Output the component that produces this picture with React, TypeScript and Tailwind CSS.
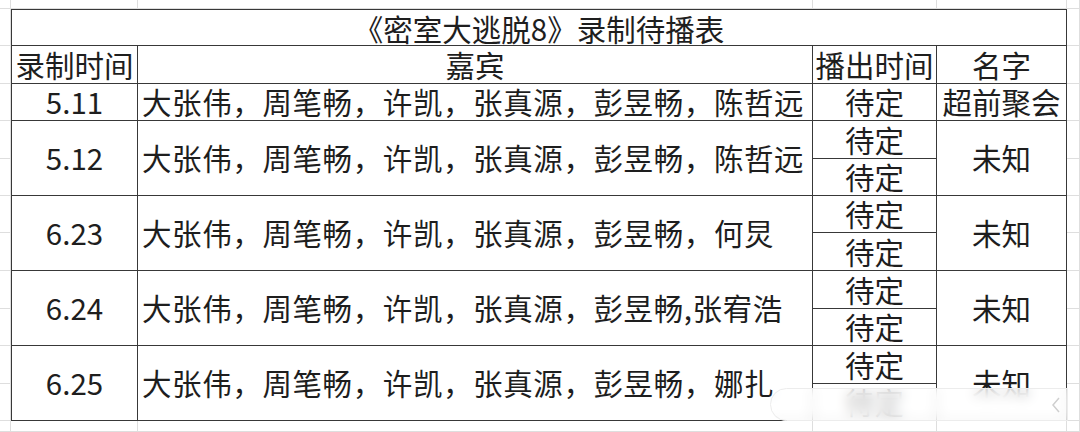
import type { ReactNode } from 'react'

const font = { fontFamily: '"Noto Sans CJK SC", "Noto Sans", sans-serif' }

type Group = {
  date: string
  guests: string
  span: string
  first: string
  second: string
}

const groups: Group[] = [
  { date: '5.12', guests: '大张伟，周笔畅，许凯，张真源，彭昱畅，陈哲远', span: 'row-start-5 row-span-2', first: 'row-start-5', second: 'row-start-6' },
  { date: '6.23', guests: '大张伟，周笔畅，许凯，张真源，彭昱畅，何炅', span: 'row-start-7 row-span-2', first: 'row-start-7', second: 'row-start-8' },
  { date: '6.24', guests: '大张伟，周笔畅，许凯，张真源，彭昱畅,张宥浩', span: 'row-start-9 row-span-2', first: 'row-start-9', second: 'row-start-10' },
  { date: '6.25', guests: '大张伟，周笔畅，许凯，张真源，彭昱畅，娜扎', span: 'row-start-11 row-span-2', first: 'row-start-11', second: 'row-start-12' },
]

const tracks =
  'grid grid-cols-[11px_127px_675px_124px_130px_13px] grid-rows-[9px_37px_38px_37px_38px_37px_37px_38px_38px_37px_38px_37px_11px]'

function Cell({ className, children, left }: { className: string; children?: ReactNode; left?: boolean }) {
  return (
    <div
      className={`flex items-center justify-center whitespace-nowrap bg-white border-r-[1.5px] border-b-[1.5px] border-[#383838] text-[#1e1e1e] leading-none ${left ? 'border-l-[1.5px]' : ''} ${className}`}
    >
      {children}
    </div>
  )
}

export default function App() {
  return (
    <div className="grid h-[432px] w-[1080px] overflow-hidden bg-white relative text-[29.5px]" style={font}>
      {/* faint spreadsheet grid behind the table */}
      <div className={`col-start-1 row-start-1 ${tracks}`}>
        {Array.from({ length: 78 }).map((_, i) => (
          <div key={i} className="border-r border-b border-[#dedede]" />
        ))}
      </div>

      <div className={`col-start-1 row-start-1 ${tracks}`}>
        <Cell left className="col-start-2 col-span-4 row-start-2 border-t-[1.5px] pt-[2px]">
          《密室大逃脱8》录制待播表
        </Cell>

        <Cell left className="col-start-2 row-start-3">录制时间</Cell>
        <Cell className="col-start-3 row-start-3">嘉宾</Cell>
        <Cell className="col-start-4 row-start-3">播出时间</Cell>
        <Cell className="col-start-5 row-start-3">名字</Cell>

        <Cell left className="col-start-2 row-start-4">5.11</Cell>
        <Cell className="col-start-3 row-start-4 justify-start pl-[4px] tracking-[0.6px]">大张伟，周笔畅，许凯，张真源，彭昱畅，陈哲远</Cell>
        <Cell className="col-start-4 row-start-4">待定</Cell>
        <Cell className="col-start-5 row-start-4">超前聚会</Cell>

        {groups.map((g) => (
          <div key={g.date} className="contents">
            <Cell left className={`col-start-2 ${g.span}`}>{g.date}</Cell>
            <Cell className={`col-start-3 ${g.span} justify-start pl-[4px] tracking-[0.6px]`}>{g.guests}</Cell>
            <Cell className={`col-start-4 ${g.first}`}>待定</Cell>
            <Cell className={`col-start-4 ${g.second}`}>待定</Cell>
            <Cell className={`col-start-5 ${g.span}`}>未知</Cell>
          </div>
        ))}
      </div>

      {/* blurred watermark strip over the bottom-right corner */}
      <div className="absolute left-[770px] top-[388px] flex h-[33px] w-[298px] items-center justify-end rounded-l-full border border-[#ececec] bg-white/70 pr-[6px] backdrop-blur-[6px]">
        <svg width="10" height="18" viewBox="0 0 10 18" fill="none">
          <polyline points="8,2 2,9 8,16" stroke="#cfcfcf" strokeWidth="1.5" />
        </svg>
      </div>
    </div>
  )
}
